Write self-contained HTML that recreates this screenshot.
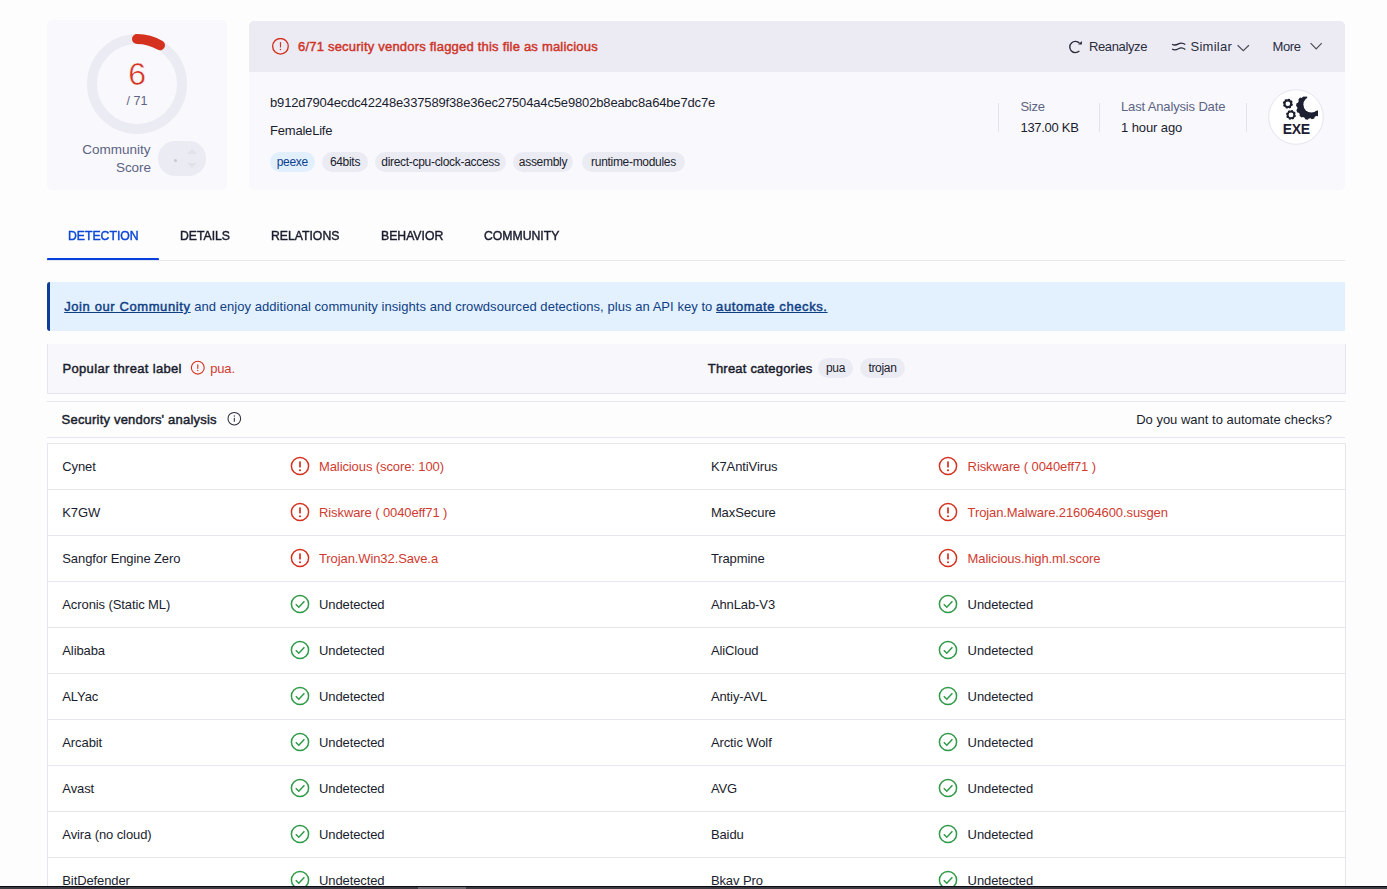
<!DOCTYPE html>
<html><head><meta charset="utf-8"><style>
html,body{margin:0;padding:0;width:1387px;height:889px;overflow:hidden;background:#fdfdfe;font-family:"Liberation Sans", sans-serif;}
.t{position:absolute;white-space:nowrap;}
.box{position:absolute;}
.abs{position:absolute;}
.pill{border-radius:10px;font-size:12px;line-height:20px;text-align:center;letter-spacing:-0.3px;}
</style></head><body>
<div class="box" style="left:47px;top:20px;width:180px;height:170px;background:#f9f8fd;border-radius:5px"></div><svg class="abs" style="left:82px;top:29px" width="110" height="110" viewBox="0 0 110 110">
<circle cx="55" cy="55" r="45" fill="none" stroke="#ebebf3" stroke-width="10"/>
<path d="M55 10 A45 45 0 0 1 78 16.3" fill="none" stroke="#d4311e" stroke-width="10" stroke-linecap="round"/>
</svg><div class="t " style="left:128.2px;top:58.21px;font-size:32px;line-height:32px;color:#d4311e;font-weight:400;letter-spacing:0px;-webkit-text-stroke:0.5px #f9f8fd;">6</div>
<div class="t " style="left:126.5px;top:95.42px;font-size:12.5px;line-height:12.5px;color:#5c6483;font-weight:400;letter-spacing:0px;">/ 71</div>
<div class="t " style="right:1236.5px;top:142.57px;font-size:13.5px;line-height:13.5px;color:#5c6483;font-weight:400;letter-spacing:0.0px;text-align:right;">Community</div>
<div class="t " style="right:1236.2px;top:160.57px;font-size:13.5px;line-height:13.5px;color:#5c6483;font-weight:400;letter-spacing:-0.1px;text-align:right;">Score</div>
<div class="box" style="left:158px;top:141px;width:48px;height:35px;background:#ebebf3;border-radius:17px"></div><div class="box" style="left:174px;top:159px;width:3px;height:3px;background:#c8c8d4;border-radius:2px"></div><svg class="abs" style="left:186px;top:148px" width="12" height="22" viewBox="0 0 12 22"><path d="M1 6 L6 1 L11 6 Z" fill="#e2e2ec"/><path d="M1 15 L6 20 L11 15 Z" fill="#e2e2ec"/></svg><div class="box" style="left:249px;top:21px;width:1096px;height:169px;background:#f9f8fd;border-radius:5px;overflow:hidden"><div style="position:absolute;left:0;top:0;width:100%;height:51px;background:#ecebf4"></div></div><svg class="abs" style="left:271px;top:38px" width="18" height="18" viewBox="0 0 18 18">
<circle cx="9.45" cy="8.3" r="7.8" fill="none" stroke="#d4311e" stroke-width="1.35"/>
<rect x="8.9" y="4.1" width="1.15" height="5.5" rx=".5" fill="#d4311e"/><circle cx="9.45" cy="11.6" r=".75" fill="#d4311e"/>
</svg><div class="t " style="left:298px;top:40.00px;font-size:13px;line-height:13px;color:#cf3427;font-weight:400;letter-spacing:0.21px;-webkit-text-stroke:0.45px currentColor;">6/71 security vendors flagged this file as malicious</div>
<svg class="abs" style="left:1064px;top:34px" width="30" height="24" viewBox="0 0 30 24">
<path d="M15.4 16.9 A5.6 5.6 0 1 1 15.5 9.2" fill="none" stroke="#262938" stroke-width="1.35"/>
<path d="M14.2 10.5 L17.9 10.5 L17.9 6.9 Z" fill="#262938"/>
</svg><div class="t " style="left:1089px;top:40.40px;font-size:13px;line-height:13px;color:#2a2d3d;font-weight:400;letter-spacing:-0.38px;">Reanalyze</div>
<svg class="abs" style="left:1166px;top:34px" width="30" height="24" viewBox="0 0 30 24">
<path d="M6.1 10.2 C8 11.4, 10.3 11.1, 12.4 9.9 C14.4 8.8, 17 8.9, 19.3 10.6" fill="none" stroke="#262938" stroke-width="1.25"/>
<path d="M6.1 15 C8 16.2, 10.3 15.9, 12.4 14.7 C14.4 13.6, 17 13.7, 19.3 15.4" fill="none" stroke="#262938" stroke-width="1.25"/>
</svg><div class="t " style="left:1190.5px;top:40.40px;font-size:13px;line-height:13px;color:#2a2d3d;font-weight:400;letter-spacing:0.25px;">Similar</div>
<svg class="abs" style="left:1230px;top:34px" width="100" height="24" viewBox="0 0 100 24"><path d="M7.6 11.2 L13.3 16.6 L18.9 11.2" fill="none" stroke="#4a4d5c" stroke-width="1.2"/><path d="M80.6 9.2 L86.2 14.8 L91.7 9.2" fill="none" stroke="#4a4d5c" stroke-width="1.2"/></svg><div class="t " style="left:1272.5px;top:40.40px;font-size:13px;line-height:13px;color:#2a2d3d;font-weight:400;letter-spacing:-0.38px;">More</div>
<div class="t " style="left:270px;top:96.00px;font-size:13px;line-height:13px;color:#1a1d2d;font-weight:400;letter-spacing:-0.15px;">b912d7904ecdc42248e337589f38e36ec27504a4c5e9802b8eabc8a64be7dc7e</div>
<div class="t " style="left:270px;top:123.70px;font-size:13px;line-height:13px;color:#1a1d2d;font-weight:400;letter-spacing:-0.2px;">FemaleLife</div>
<div class="box pill" style="left:270px;top:152px;width:44.6px;height:20px;background:#e2effc;color:#0d3f8f">peexe</div><div class="box pill" style="left:322px;top:152px;width:46.0px;height:20px;background:#ebebf3;color:#1a1d2d">64bits</div><div class="box pill" style="left:375px;top:152px;width:131.0px;height:20px;background:#ebebf3;color:#1a1d2d">direct-cpu-clock-access</div><div class="box pill" style="left:513px;top:152px;width:60.0px;height:20px;background:#ebebf3;color:#1a1d2d">assembly</div><div class="box pill" style="left:582px;top:152px;width:103.0px;height:20px;background:#ebebf3;color:#1a1d2d">runtime-modules</div><div class="box" style="left:998px;top:103px;width:1px;height:29px;background:#e3e3ec"></div><div class="box" style="left:1099px;top:103px;width:1px;height:29px;background:#e3e3ec"></div><div class="box" style="left:1246px;top:103px;width:1px;height:29px;background:#e3e3ec"></div><div class="t " style="left:1020.5px;top:100.00px;font-size:13px;line-height:13px;color:#5c6483;font-weight:400;letter-spacing:-0.3px;">Size</div>
<div class="t " style="left:1020.5px;top:121.30px;font-size:13px;line-height:13px;color:#1a1d2d;font-weight:400;letter-spacing:-0.3px;">137.00 KB</div>
<div class="t " style="left:1121px;top:100.00px;font-size:13px;line-height:13px;color:#5c6483;font-weight:400;letter-spacing:-0.15px;">Last Analysis Date</div>
<div class="t " style="left:1121px;top:121.30px;font-size:13px;line-height:13px;color:#1a1d2d;font-weight:400;letter-spacing:-0.1px;">1 hour ago</div>
<svg class="abs" style="left:1268px;top:89px" width="56" height="56" viewBox="0 0 56 56">
<defs><mask id="m1"><rect x="0" y="0" width="56" height="56" fill="#fff"/><circle cx="43.3" cy="15.6" r="7.9" fill="#000"/><path d="M39.2 9.5 L39.2 -5 L60 -5 L60 21.5 L48.5 21.5 Z" fill="#000"/><rect x="0" y="0" width="56" height="7.6" fill="#000"/><rect x="50" y="0" width="10" height="56" fill="#000"/></mask></defs>
<circle cx="28" cy="28" r="27.3" fill="#ffffff" stroke="#e4e4ee" stroke-width="1"/>
<g fill="#1d2030">
<path fill-rule="evenodd" d="M24.25 14.70 L24.91 15.30 L24.48 16.84 L23.60 17.00 L22.96 17.81 L23.01 18.71 L21.62 19.48 L20.88 18.98 L19.85 19.10 L19.25 19.76 L17.71 19.33 L17.55 18.45 L16.74 17.81 L15.84 17.86 L15.07 16.47 L15.57 15.73 L15.45 14.70 L14.79 14.10 L15.22 12.56 L16.10 12.40 L16.74 11.59 L16.69 10.69 L18.08 9.92 L18.82 10.42 L19.85 10.30 L20.45 9.64 L21.99 10.07 L22.15 10.95 L22.96 11.59 L23.86 11.54 L24.63 12.93 L24.13 13.67 Z M17.55 14.70 a2.3 2.3 0 1 0 4.60 0 a2.3 2.3 0 1 0 -4.60 0 Z"/>
<path fill-rule="evenodd" d="M27.27 25.90 L27.94 26.49 L27.51 27.99 L26.64 28.15 L26.01 28.94 L26.07 29.83 L24.70 30.59 L23.97 30.08 L22.97 30.20 L22.38 30.87 L20.88 30.44 L20.72 29.57 L19.93 28.94 L19.04 29.00 L18.28 27.63 L18.79 26.90 L18.67 25.90 L18.00 25.31 L18.43 23.81 L19.30 23.65 L19.93 22.86 L19.87 21.97 L21.24 21.21 L21.97 21.72 L22.97 21.60 L23.56 20.93 L25.06 21.36 L25.22 22.23 L26.01 22.86 L26.90 22.80 L27.66 24.17 L27.15 24.90 Z M20.57 25.90 a2.4 2.4 0 1 0 4.80 0 a2.4 2.4 0 1 0 -4.80 0 Z"/>
<path d="M52.40 17.90 L53.56 18.90 L53.07 21.54 L51.63 22.06 L50.85 23.70 L51.35 25.15 L49.61 27.18 L48.10 26.91 L46.60 27.95 L46.31 29.45 L43.79 30.35 L42.61 29.36 L40.80 29.50 L39.80 30.66 L37.16 30.17 L36.64 28.73 L35.00 27.95 L33.55 28.45 L31.52 26.71 L31.79 25.20 L30.75 23.70 L29.25 23.41 L28.35 20.89 L29.34 19.71 L29.20 17.90 L28.04 16.90 L28.53 14.26 L29.97 13.74 L30.75 12.10 L30.25 10.65 L31.99 8.62 L33.50 8.89 L35.00 7.85 L35.29 6.35 L37.81 5.45 L38.99 6.44 L40.80 6.30 L41.80 5.14 L44.44 5.63 L44.96 7.07 L46.60 7.85 L48.05 7.35 L50.08 9.09 L49.81 10.60 L50.85 12.10 L52.35 12.39 L53.25 14.91 L52.26 16.09 Z" mask="url(#m1)"/>
</g>
</svg><div class="t " style="left:1282.8px;top:121.65px;font-size:14px;line-height:14px;color:#1d2030;font-weight:700;letter-spacing:-0.3px;">EXE</div>
<div class="t " style="left:68.1px;top:229.30px;font-size:13px;line-height:13px;color:#0b47d9;font-weight:400;letter-spacing:0px;-webkit-text-stroke:0.45px #0b47d9;transform:scaleX(0.94);transform-origin:0 0;">DETECTION</div>
<div class="t " style="left:179.7px;top:229.30px;font-size:13px;line-height:13px;color:#1a1d2d;font-weight:400;letter-spacing:0px;-webkit-text-stroke:0.45px #1a1d2d;transform:scaleX(0.94);transform-origin:0 0;">DETAILS</div>
<div class="t " style="left:271.0px;top:229.30px;font-size:13px;line-height:13px;color:#1a1d2d;font-weight:400;letter-spacing:0px;-webkit-text-stroke:0.45px #1a1d2d;transform:scaleX(0.94);transform-origin:0 0;">RELATIONS</div>
<div class="t " style="left:380.8px;top:229.30px;font-size:13px;line-height:13px;color:#1a1d2d;font-weight:400;letter-spacing:0px;-webkit-text-stroke:0.45px #1a1d2d;transform:scaleX(0.94);transform-origin:0 0;">BEHAVIOR</div>
<div class="t " style="left:484.4px;top:229.30px;font-size:13px;line-height:13px;color:#1a1d2d;font-weight:400;letter-spacing:0px;-webkit-text-stroke:0.45px #1a1d2d;transform:scaleX(0.94);transform-origin:0 0;">COMMUNITY</div>
<div class="box" style="left:47px;top:260px;width:1298px;height:1px;background:#e6e6f0"></div><div class="box" style="left:47px;top:258px;width:112px;height:2px;background:#0640dc;border-radius:1px 1px 0 0"></div><div class="box" style="left:47px;top:282px;width:1298px;height:49px;background:#e3f0fd;border-left:3px solid #0b3e9c;border-radius:3px 0 0 3px;box-sizing:border-box"></div><div class="t " style="left:64.2px;top:300.00px;font-size:13px;line-height:13px;color:#0f3f85;font-weight:400;letter-spacing:0.05px;"><span style="text-decoration:underline;letter-spacing:0.6px;-webkit-text-stroke:0.45px currentColor">Join our Community</span> and enjoy additional community insights and crowdsourced detections, plus an API key to <span style="text-decoration:underline;letter-spacing:0.6px;-webkit-text-stroke:0.45px currentColor">automate checks.</span></div>
<div class="box" style="left:47px;top:344px;width:1299px;height:50px;background:#f8f8fc;border:1px solid #e6e6f0;border-top:none;box-sizing:border-box"></div><div class="t " style="left:62.5px;top:362.00px;font-size:13px;line-height:13px;color:#1a1d2d;font-weight:400;letter-spacing:0.33px;-webkit-text-stroke:0.45px currentColor;">Popular threat label</div>
<svg class="abs" style="left:190px;top:360px" width="16" height="16" viewBox="0 0 16 16">
<circle cx="7.8" cy="7.7" r="6.4" fill="none" stroke="#d4311e" stroke-width="1.1"/>
<rect x="7.25" y="4.3" width="1.1" height="4.6" rx=".4" fill="#d4311e"/><circle cx="7.8" cy="10.5" r=".65" fill="#d4311e"/>
</svg><div class="t " style="left:210.3px;top:362.00px;font-size:13px;line-height:13px;color:#d13b2f;font-weight:400;letter-spacing:-0.2px;">pua.</div>
<div class="t " style="left:707.8px;top:362.00px;font-size:13px;line-height:13px;color:#1a1d2d;font-weight:400;letter-spacing:0.2px;-webkit-text-stroke:0.45px currentColor;">Threat categories</div>
<div class="box pill" style="left:818px;top:358px;width:35px;height:20px;background:#ebebf3;color:#1a1d2d">pua</div><div class="box pill" style="left:860px;top:358px;width:45px;height:20px;background:#ebebf3;color:#1a1d2d">trojan</div><div class="box" style="left:47px;top:401px;width:1298px;height:37px;border-top:1px solid #e6e6f0;border-bottom:1px solid #e6e6f0;box-sizing:border-box"></div><div class="t " style="left:61.6px;top:413.00px;font-size:13px;line-height:13px;color:#1a1d2d;font-weight:400;letter-spacing:0.2px;-webkit-text-stroke:0.45px currentColor;">Security vendors' analysis</div>
<svg class="abs" style="left:225.5px;top:411px" width="16" height="16" viewBox="0 0 16 16">
<circle cx="8.3" cy="7.7" r="6.3" fill="none" stroke="#2a2d3d" stroke-width="1.05"/>
<rect x="7.8" y="6.8" width="1.05" height="3.9" fill="#2a2d3d"/><circle cx="8.3" cy="5" r=".65" fill="#2a2d3d"/>
</svg><div class="t " style="right:55px;top:413.00px;font-size:13px;line-height:13px;color:#1a1d2d;font-weight:400;letter-spacing:0.0px;text-align:right;">Do you want to automate checks?</div>
<div class="box" style="left:47px;top:443px;width:1299px;height:460px;border:1px solid #e6e6f0;box-sizing:border-box;background:#ffffff"></div><div class="t " style="left:62.3px;top:459.70px;font-size:13px;line-height:13px;color:#1a1d2d;font-weight:400;letter-spacing:-0.1px;">Cynet</div>
<svg class="abs" style="left:290px;top:456.4px" width="20" height="20" viewBox="0 0 20 20">
<circle cx="10" cy="10" r="8.6" fill="none" stroke="#d4311e" stroke-width="1.5"/>
<rect x="9.15" y="5.2" width="1.7" height="6.4" rx=".7" fill="#d4311e"/><circle cx="10" cy="14.2" r="1.05" fill="#d4311e"/>
</svg><div class="t " style="left:319px;top:459.70px;font-size:13px;line-height:13px;color:#d13b2f;font-weight:400;letter-spacing:-0.1px;">Malicious (score: 100)</div>
<div class="t " style="left:710.9px;top:459.70px;font-size:13px;line-height:13px;color:#1a1d2d;font-weight:400;letter-spacing:-0.1px;">K7AntiVirus</div>
<svg class="abs" style="left:937.5px;top:456.4px" width="20" height="20" viewBox="0 0 20 20">
<circle cx="10" cy="10" r="8.6" fill="none" stroke="#d4311e" stroke-width="1.5"/>
<rect x="9.15" y="5.2" width="1.7" height="6.4" rx=".7" fill="#d4311e"/><circle cx="10" cy="14.2" r="1.05" fill="#d4311e"/>
</svg><div class="t " style="left:967.6px;top:459.70px;font-size:13px;line-height:13px;color:#d13b2f;font-weight:400;letter-spacing:-0.1px;">Riskware ( 0040eff71 )</div>
<div class="box" style="left:48px;top:489px;width:1297px;height:1px;background:#e6e6f0"></div><div class="t " style="left:62.3px;top:505.70px;font-size:13px;line-height:13px;color:#1a1d2d;font-weight:400;letter-spacing:-0.1px;">K7GW</div>
<svg class="abs" style="left:290px;top:502.4px" width="20" height="20" viewBox="0 0 20 20">
<circle cx="10" cy="10" r="8.6" fill="none" stroke="#d4311e" stroke-width="1.5"/>
<rect x="9.15" y="5.2" width="1.7" height="6.4" rx=".7" fill="#d4311e"/><circle cx="10" cy="14.2" r="1.05" fill="#d4311e"/>
</svg><div class="t " style="left:319px;top:505.70px;font-size:13px;line-height:13px;color:#d13b2f;font-weight:400;letter-spacing:-0.1px;">Riskware ( 0040eff71 )</div>
<div class="t " style="left:710.9px;top:505.70px;font-size:13px;line-height:13px;color:#1a1d2d;font-weight:400;letter-spacing:-0.1px;">MaxSecure</div>
<svg class="abs" style="left:937.5px;top:502.4px" width="20" height="20" viewBox="0 0 20 20">
<circle cx="10" cy="10" r="8.6" fill="none" stroke="#d4311e" stroke-width="1.5"/>
<rect x="9.15" y="5.2" width="1.7" height="6.4" rx=".7" fill="#d4311e"/><circle cx="10" cy="14.2" r="1.05" fill="#d4311e"/>
</svg><div class="t " style="left:967.6px;top:505.70px;font-size:13px;line-height:13px;color:#d13b2f;font-weight:400;letter-spacing:-0.1px;">Trojan.Malware.216064600.susgen</div>
<div class="box" style="left:48px;top:535px;width:1297px;height:1px;background:#e6e6f0"></div><div class="t " style="left:62.3px;top:551.70px;font-size:13px;line-height:13px;color:#1a1d2d;font-weight:400;letter-spacing:-0.1px;">Sangfor Engine Zero</div>
<svg class="abs" style="left:290px;top:548.4px" width="20" height="20" viewBox="0 0 20 20">
<circle cx="10" cy="10" r="8.6" fill="none" stroke="#d4311e" stroke-width="1.5"/>
<rect x="9.15" y="5.2" width="1.7" height="6.4" rx=".7" fill="#d4311e"/><circle cx="10" cy="14.2" r="1.05" fill="#d4311e"/>
</svg><div class="t " style="left:319px;top:551.70px;font-size:13px;line-height:13px;color:#d13b2f;font-weight:400;letter-spacing:-0.1px;">Trojan.Win32.Save.a</div>
<div class="t " style="left:710.9px;top:551.70px;font-size:13px;line-height:13px;color:#1a1d2d;font-weight:400;letter-spacing:-0.1px;">Trapmine</div>
<svg class="abs" style="left:937.5px;top:548.4px" width="20" height="20" viewBox="0 0 20 20">
<circle cx="10" cy="10" r="8.6" fill="none" stroke="#d4311e" stroke-width="1.5"/>
<rect x="9.15" y="5.2" width="1.7" height="6.4" rx=".7" fill="#d4311e"/><circle cx="10" cy="14.2" r="1.05" fill="#d4311e"/>
</svg><div class="t " style="left:967.6px;top:551.70px;font-size:13px;line-height:13px;color:#d13b2f;font-weight:400;letter-spacing:-0.1px;">Malicious.high.ml.score</div>
<div class="box" style="left:48px;top:581px;width:1297px;height:1px;background:#e6e6f0"></div><div class="t " style="left:62.3px;top:597.70px;font-size:13px;line-height:13px;color:#1a1d2d;font-weight:400;letter-spacing:-0.1px;">Acronis (Static ML)</div>
<svg class="abs" style="left:290px;top:594.4px" width="20" height="20" viewBox="0 0 20 20">
<circle cx="10" cy="10" r="8.6" fill="none" stroke="#2f9a48" stroke-width="1.5"/>
<path d="M5.8 10.2 L8.8 13.2 L14.4 7.2" fill="none" stroke="#2f9a48" stroke-width="1.5"/>
</svg><div class="t " style="left:319px;top:597.70px;font-size:13px;line-height:13px;color:#1a1d2d;font-weight:400;letter-spacing:-0.1px;">Undetected</div>
<div class="t " style="left:710.9px;top:597.70px;font-size:13px;line-height:13px;color:#1a1d2d;font-weight:400;letter-spacing:-0.1px;">AhnLab-V3</div>
<svg class="abs" style="left:937.5px;top:594.4px" width="20" height="20" viewBox="0 0 20 20">
<circle cx="10" cy="10" r="8.6" fill="none" stroke="#2f9a48" stroke-width="1.5"/>
<path d="M5.8 10.2 L8.8 13.2 L14.4 7.2" fill="none" stroke="#2f9a48" stroke-width="1.5"/>
</svg><div class="t " style="left:967.6px;top:597.70px;font-size:13px;line-height:13px;color:#1a1d2d;font-weight:400;letter-spacing:-0.1px;">Undetected</div>
<div class="box" style="left:48px;top:627px;width:1297px;height:1px;background:#e6e6f0"></div><div class="t " style="left:62.3px;top:643.70px;font-size:13px;line-height:13px;color:#1a1d2d;font-weight:400;letter-spacing:-0.1px;">Alibaba</div>
<svg class="abs" style="left:290px;top:640.4px" width="20" height="20" viewBox="0 0 20 20">
<circle cx="10" cy="10" r="8.6" fill="none" stroke="#2f9a48" stroke-width="1.5"/>
<path d="M5.8 10.2 L8.8 13.2 L14.4 7.2" fill="none" stroke="#2f9a48" stroke-width="1.5"/>
</svg><div class="t " style="left:319px;top:643.70px;font-size:13px;line-height:13px;color:#1a1d2d;font-weight:400;letter-spacing:-0.1px;">Undetected</div>
<div class="t " style="left:710.9px;top:643.70px;font-size:13px;line-height:13px;color:#1a1d2d;font-weight:400;letter-spacing:-0.1px;">AliCloud</div>
<svg class="abs" style="left:937.5px;top:640.4px" width="20" height="20" viewBox="0 0 20 20">
<circle cx="10" cy="10" r="8.6" fill="none" stroke="#2f9a48" stroke-width="1.5"/>
<path d="M5.8 10.2 L8.8 13.2 L14.4 7.2" fill="none" stroke="#2f9a48" stroke-width="1.5"/>
</svg><div class="t " style="left:967.6px;top:643.70px;font-size:13px;line-height:13px;color:#1a1d2d;font-weight:400;letter-spacing:-0.1px;">Undetected</div>
<div class="box" style="left:48px;top:673px;width:1297px;height:1px;background:#e6e6f0"></div><div class="t " style="left:62.3px;top:689.70px;font-size:13px;line-height:13px;color:#1a1d2d;font-weight:400;letter-spacing:-0.1px;">ALYac</div>
<svg class="abs" style="left:290px;top:686.4px" width="20" height="20" viewBox="0 0 20 20">
<circle cx="10" cy="10" r="8.6" fill="none" stroke="#2f9a48" stroke-width="1.5"/>
<path d="M5.8 10.2 L8.8 13.2 L14.4 7.2" fill="none" stroke="#2f9a48" stroke-width="1.5"/>
</svg><div class="t " style="left:319px;top:689.70px;font-size:13px;line-height:13px;color:#1a1d2d;font-weight:400;letter-spacing:-0.1px;">Undetected</div>
<div class="t " style="left:710.9px;top:689.70px;font-size:13px;line-height:13px;color:#1a1d2d;font-weight:400;letter-spacing:-0.1px;">Antiy-AVL</div>
<svg class="abs" style="left:937.5px;top:686.4px" width="20" height="20" viewBox="0 0 20 20">
<circle cx="10" cy="10" r="8.6" fill="none" stroke="#2f9a48" stroke-width="1.5"/>
<path d="M5.8 10.2 L8.8 13.2 L14.4 7.2" fill="none" stroke="#2f9a48" stroke-width="1.5"/>
</svg><div class="t " style="left:967.6px;top:689.70px;font-size:13px;line-height:13px;color:#1a1d2d;font-weight:400;letter-spacing:-0.1px;">Undetected</div>
<div class="box" style="left:48px;top:719px;width:1297px;height:1px;background:#e6e6f0"></div><div class="t " style="left:62.3px;top:735.70px;font-size:13px;line-height:13px;color:#1a1d2d;font-weight:400;letter-spacing:-0.1px;">Arcabit</div>
<svg class="abs" style="left:290px;top:732.4px" width="20" height="20" viewBox="0 0 20 20">
<circle cx="10" cy="10" r="8.6" fill="none" stroke="#2f9a48" stroke-width="1.5"/>
<path d="M5.8 10.2 L8.8 13.2 L14.4 7.2" fill="none" stroke="#2f9a48" stroke-width="1.5"/>
</svg><div class="t " style="left:319px;top:735.70px;font-size:13px;line-height:13px;color:#1a1d2d;font-weight:400;letter-spacing:-0.1px;">Undetected</div>
<div class="t " style="left:710.9px;top:735.70px;font-size:13px;line-height:13px;color:#1a1d2d;font-weight:400;letter-spacing:-0.1px;">Arctic Wolf</div>
<svg class="abs" style="left:937.5px;top:732.4px" width="20" height="20" viewBox="0 0 20 20">
<circle cx="10" cy="10" r="8.6" fill="none" stroke="#2f9a48" stroke-width="1.5"/>
<path d="M5.8 10.2 L8.8 13.2 L14.4 7.2" fill="none" stroke="#2f9a48" stroke-width="1.5"/>
</svg><div class="t " style="left:967.6px;top:735.70px;font-size:13px;line-height:13px;color:#1a1d2d;font-weight:400;letter-spacing:-0.1px;">Undetected</div>
<div class="box" style="left:48px;top:765px;width:1297px;height:1px;background:#e6e6f0"></div><div class="t " style="left:62.3px;top:781.70px;font-size:13px;line-height:13px;color:#1a1d2d;font-weight:400;letter-spacing:-0.1px;">Avast</div>
<svg class="abs" style="left:290px;top:778.4px" width="20" height="20" viewBox="0 0 20 20">
<circle cx="10" cy="10" r="8.6" fill="none" stroke="#2f9a48" stroke-width="1.5"/>
<path d="M5.8 10.2 L8.8 13.2 L14.4 7.2" fill="none" stroke="#2f9a48" stroke-width="1.5"/>
</svg><div class="t " style="left:319px;top:781.70px;font-size:13px;line-height:13px;color:#1a1d2d;font-weight:400;letter-spacing:-0.1px;">Undetected</div>
<div class="t " style="left:710.9px;top:781.70px;font-size:13px;line-height:13px;color:#1a1d2d;font-weight:400;letter-spacing:-0.1px;">AVG</div>
<svg class="abs" style="left:937.5px;top:778.4px" width="20" height="20" viewBox="0 0 20 20">
<circle cx="10" cy="10" r="8.6" fill="none" stroke="#2f9a48" stroke-width="1.5"/>
<path d="M5.8 10.2 L8.8 13.2 L14.4 7.2" fill="none" stroke="#2f9a48" stroke-width="1.5"/>
</svg><div class="t " style="left:967.6px;top:781.70px;font-size:13px;line-height:13px;color:#1a1d2d;font-weight:400;letter-spacing:-0.1px;">Undetected</div>
<div class="box" style="left:48px;top:811px;width:1297px;height:1px;background:#e6e6f0"></div><div class="t " style="left:62.3px;top:827.70px;font-size:13px;line-height:13px;color:#1a1d2d;font-weight:400;letter-spacing:-0.1px;">Avira (no cloud)</div>
<svg class="abs" style="left:290px;top:824.4px" width="20" height="20" viewBox="0 0 20 20">
<circle cx="10" cy="10" r="8.6" fill="none" stroke="#2f9a48" stroke-width="1.5"/>
<path d="M5.8 10.2 L8.8 13.2 L14.4 7.2" fill="none" stroke="#2f9a48" stroke-width="1.5"/>
</svg><div class="t " style="left:319px;top:827.70px;font-size:13px;line-height:13px;color:#1a1d2d;font-weight:400;letter-spacing:-0.1px;">Undetected</div>
<div class="t " style="left:710.9px;top:827.70px;font-size:13px;line-height:13px;color:#1a1d2d;font-weight:400;letter-spacing:-0.1px;">Baidu</div>
<svg class="abs" style="left:937.5px;top:824.4px" width="20" height="20" viewBox="0 0 20 20">
<circle cx="10" cy="10" r="8.6" fill="none" stroke="#2f9a48" stroke-width="1.5"/>
<path d="M5.8 10.2 L8.8 13.2 L14.4 7.2" fill="none" stroke="#2f9a48" stroke-width="1.5"/>
</svg><div class="t " style="left:967.6px;top:827.70px;font-size:13px;line-height:13px;color:#1a1d2d;font-weight:400;letter-spacing:-0.1px;">Undetected</div>
<div class="box" style="left:48px;top:857px;width:1297px;height:1px;background:#e6e6f0"></div><div class="t " style="left:62.3px;top:873.70px;font-size:13px;line-height:13px;color:#1a1d2d;font-weight:400;letter-spacing:-0.1px;">BitDefender</div>
<svg class="abs" style="left:290px;top:870.4px" width="20" height="20" viewBox="0 0 20 20">
<circle cx="10" cy="10" r="8.6" fill="none" stroke="#2f9a48" stroke-width="1.5"/>
<path d="M5.8 10.2 L8.8 13.2 L14.4 7.2" fill="none" stroke="#2f9a48" stroke-width="1.5"/>
</svg><div class="t " style="left:319px;top:873.70px;font-size:13px;line-height:13px;color:#1a1d2d;font-weight:400;letter-spacing:-0.1px;">Undetected</div>
<div class="t " style="left:710.9px;top:873.70px;font-size:13px;line-height:13px;color:#1a1d2d;font-weight:400;letter-spacing:-0.1px;">Bkav Pro</div>
<svg class="abs" style="left:937.5px;top:870.4px" width="20" height="20" viewBox="0 0 20 20">
<circle cx="10" cy="10" r="8.6" fill="none" stroke="#2f9a48" stroke-width="1.5"/>
<path d="M5.8 10.2 L8.8 13.2 L14.4 7.2" fill="none" stroke="#2f9a48" stroke-width="1.5"/>
</svg><div class="t " style="left:967.6px;top:873.70px;font-size:13px;line-height:13px;color:#1a1d2d;font-weight:400;letter-spacing:-0.1px;">Undetected</div>
<div class="box" style="left:0;top:886px;width:1387px;height:3px;background:#3c3b41;border-top:1px solid #0b0b18;box-sizing:border-box"></div><div class="box" style="left:418px;top:887px;width:48px;height:2px;background:#6c6b71"></div>
</body></html>
